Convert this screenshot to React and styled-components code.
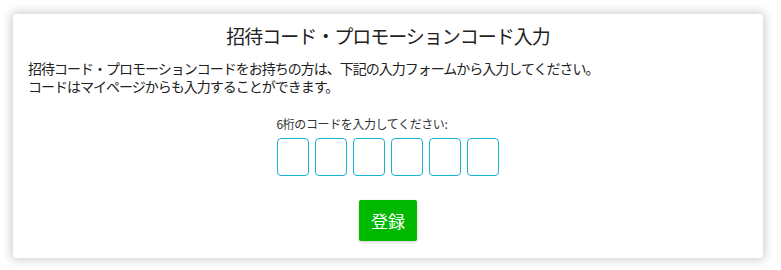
import React from "react";
import styled, { createGlobalStyle } from "styled-components";

const Global = createGlobalStyle`
  html, body { margin: 0; padding: 0; background: #fff; }
  body { font-family: "Noto Sans CJK JP", "Noto Sans", sans-serif; }
`;

const Page = styled.div`
  padding: 14px 18px 12px 13px;
`;

const Card = styled.section`
  background: #fff;
  border-radius: 4px;
  box-shadow: 0 0 8px 3px rgba(0, 0, 0, 0.16);
  height: 244px;
  box-sizing: border-box;
  padding: 8px 15px 0;
  display: flex;
  flex-direction: column;
`;

const Title = styled.h1`
  margin: 0;
  font-size: 19px;
  letter-spacing: -1px;
  font-weight: 400;
  line-height: 28px;
  text-align: center;
  color: #222;
`;

const Lead = styled.p`
  margin: 9px 0 0;
  font-size: 14px;
  letter-spacing: -1px;
  line-height: 18px;
  color: #222;
`;

const Form = styled.div`
  display: flex;
  flex-direction: column;
  align-items: center;
  margin-top: 21px;
`;

const Label = styled.div`
  font-size: 12px;
  letter-spacing: -0.4px;
  line-height: 16px;
  color: #333;
  align-self: center;
  width: 223px;
`;

const Boxes = styled.div`
  display: flex;
  gap: 6px;
  margin-top: 6px;
`;

const Digit = styled.input`
  width: 32px;
  height: 38px;
  box-sizing: border-box;
  border: 1px solid #18b2d2;
  border-radius: 4px;
  padding: 0;
  margin: 0;
  background: #fff;
  text-align: center;
  font-size: 18px;
  outline: none;
`;

const Submit = styled.button`
  margin-top: 24px;
  width: 58px;
  height: 41px;
  border: none;
  border-radius: 2px;
  background: #00b900;
  color: #fff;
  font-family: "Noto Sans CJK JP", sans-serif;
  font-size: 17px;
  box-shadow: 0 1px 3px rgba(0, 0, 0, 0.2);
  cursor: pointer;
`;

export default function App() {
  return (
    <>
      <Global />
      <Page>
        <Card>
          <Title>招待コード・プロモーションコード入力</Title>
          <Lead>
            招待コード・プロモーションコードをお持ちの方は、下記の入力フォームから入力してください。
            <br />
            コードはマイページからも入力することができます。
          </Lead>
          <Form>
            <Label>6桁のコードを入力してください:</Label>
            <Boxes>
              {[0, 1, 2, 3, 4, 5].map((i) => (
                <Digit key={i} maxLength={1} aria-label={`digit ${i + 1}`} />
              ))}
            </Boxes>
            <Submit>登録</Submit>
          </Form>
        </Card>
      </Page>
    </>
  );
}
